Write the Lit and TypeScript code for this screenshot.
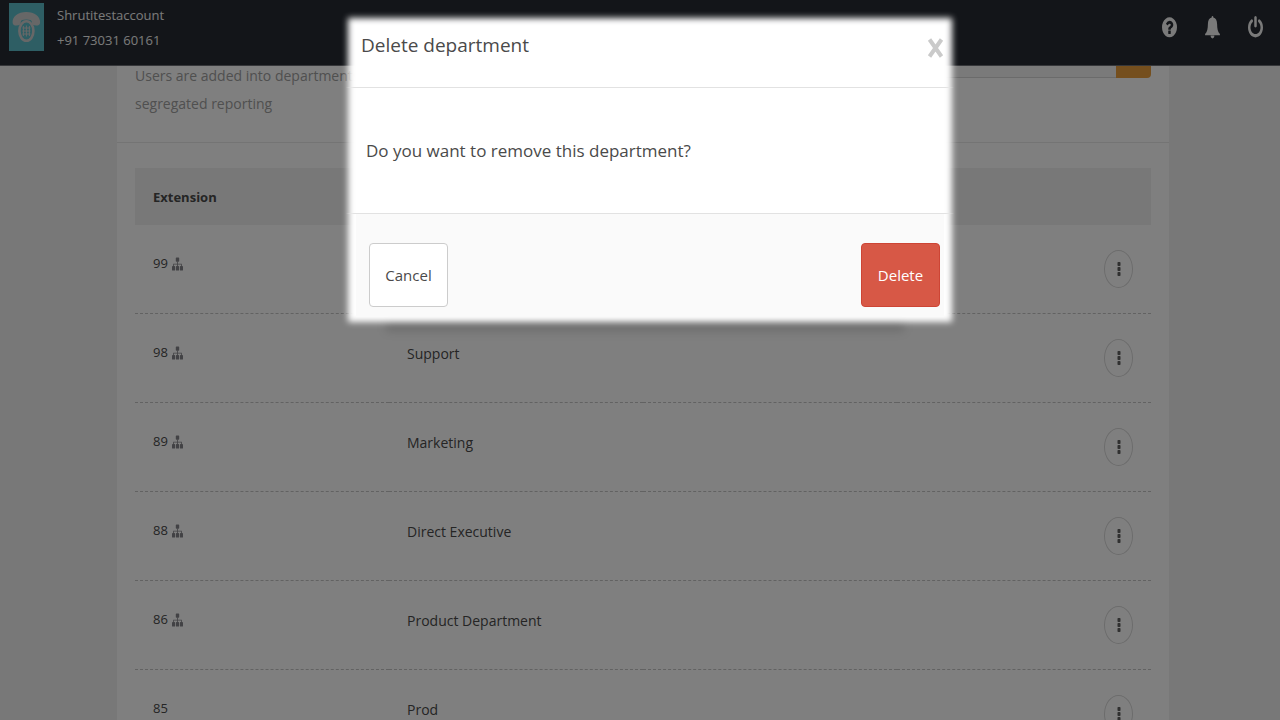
import { LitElement, html, css } from "lit";
import { customElement } from "lit/decorators.js";

interface Department {
  extension: string;
  name: string;
}

const DEPARTMENTS: Department[] = [
  { extension: "99", name: "" },
  { extension: "98", name: "Support" },
  { extension: "89", name: "Marketing" },
  { extension: "88", name: "Direct Executive" },
  { extension: "86", name: "Product Department" },
  { extension: "85", name: "Prod" },
];

const sitemapIcon = html`<svg class="sitemap" viewBox="0 0 11 14" preserveAspectRatio="none" aria-hidden="true">
  <rect x="3.8" y="0.4" width="3.4" height="4.4" rx="0.7" />
  <path d="M5.1 4.5h.8v2.2h3.9v2.6H9V7.6H5.9v1.7h-.8V7.6H2v1.7h-.8V6.7h3.9z" />
  <rect x="0" y="9" width="3.1" height="4.6" rx="0.7" />
  <rect x="3.9" y="9" width="3.2" height="4.6" rx="0.7" />
  <rect x="7.9" y="9" width="3.1" height="4.6" rx="0.7" />
</svg>`;

@customElement("top-bar")
export class TopBar extends LitElement {
  static styles = css`
    :host {
      display: flex;
      align-items: flex-start;
      justify-content: space-between;
      box-sizing: border-box;
      height: 66px;
      padding: 2px 17px 0 9px;
      background: #262a32;
      border-bottom: 1px solid #6c6f75;
      color: #fff;
    }
    .account {
      display: flex;
      gap: 13px;
    }
    .logo {
      display: block;
      width: 35px;
      height: 49px;
    }
    .lines {
      padding-top: 1px;
      font-size: 13px;
      line-height: 25px;
      color: #f4f4f4;
    }
    .actions {
      display: flex;
      gap: 28px;
      padding-top: 13px;
    }
    .action {
      display: block;
      width: 15px;
      height: 24px;
      padding: 0;
      border: 0;
      background: none;
      color: #f4f4f4;
    }
    .icon {
      display: block;
      width: 15px;
      height: 24px;
      fill: currentColor;
    }
  `;

  render() {
    return html`
      <div class="account">
        <svg class="logo" viewBox="0 0 35 49" role="img" aria-label="Telephone">
          <rect y="1" width="35" height="48" fill="#5cbcc8" />
          <path
            fill="#cfcfcf"
            d="M3.6 20.2C3.4 14.6 9 9.9 17.3 9.9s14 4.7 13.8 10.3c0 2.4-1.3 3.4-4 3.4-2.900 0-4.300-1.100-4.300-3.800 0-1.500-1.900-2.300-5.500-2.300s-5.500.800-5.500 2.300c0 2.700-1.400 3.800-4.200 3.800-2.700 0-4-1-4-3.400z"
          />
          <ellipse cx="17.400" cy="29" rx="7" ry="9.800" fill="none" stroke="#cfcfcf" stroke-width="2.600" />
          <path
            stroke="#cfcfcf"
            stroke-width="1"
            fill="none"
            d="M14.400 24v10M17.400 23.500v11M20.400 24v10M13.400 26h8M13.400 29h8M13.400 32h8"
          />
        </svg>
        <div class="lines">
          <div>Shrutitestaccount</div>
          <div>+91 73031 60161</div>
        </div>
      </div>
      <div class="actions">
        <button class="action" aria-label="Help">
          <svg class="icon" viewBox="128 -50 1536 1850" preserveAspectRatio="none">
            <path
              d="M1024 1376v-192q0-14-9-23t-23-9h-192q-14 0-23 9t-9 23v192q0 14 9 23t23 9h192q14 0 23-9t9-23zm256-672q0-88-55.500-163t-138.500-116-170-41q-243 0-371 213-15 24 8 42l132 100q7 6 19 6 16 0 25-12 53-68 86-92 34-24 86-24 48 0 85.500 26t37.500 59q0 38-20 61t-68 45q-63 28-115.500 86.500t-52.500 125.500v36q0 14 9 23t23 9h192q14 0 23-9t9-23q0-19 21.500-49.500t54.500-49.500q32-18 49-28.500t46-35 44.500-48 28-60.500 12.500-81zm384 192q0 209-103 385.500t-279.500 279.500-385.500 103-385.500-103-279.500-279.500-103-385.500 103-385.500 279.500-279.500 385.500-103 385.500 103 279.500 279.500 103 385.500z"
            />
          </svg>
        </button>
        <button class="action" aria-label="Notifications">
          <svg class="icon" viewBox="0 0 15 24">
            <path
              d="M6.700 2.600V1.900a.8.8 0 0 1 1.600 0v.7c2.500.6 3.700 2.900 3.800 6.300.1 4.900.6 7.700 2.800 10.100v1.300H.1V19c2.200-2.400 2.700-5.200 2.800-10.100.1-3.400 1.300-5.700 3.800-6.300z"
            />
            <path d="M5.600 20.600h3.800c0 1.700-.7 2.800-1.900 2.800s-1.900-1.100-1.900-2.800z" />
          </svg>
        </button>
        <button class="action" aria-label="Log out">
          <svg class="icon" viewBox="128 -80 1536 1870" preserveAspectRatio="none">
            <path
              d="M1664 896q0 156-61 298t-164 245-245 164-298 61-298-61-245-164-164-245-61-298q0-182 80.500-343t226.500-270q43-32 95.500-25t83.500 50q32 42 24.500 94.500t-49.500 84.500q-98 74-151.500 181t-53.500 228q0 104 40.500 198.500t109.500 163.500 163.500 109.500 198.500 40.500 198.500-40.500 163.500-109.500 109.500-163.500 40.500-198.500q0-121-53.500-228t-151.500-181q-42-32-49.500-84.500t24.500-94.500q31-43 84-50t95 25q146 109 226.500 270t80.500 343zm-640-768v640q0 52-38 90t-90 38-90-38-38-90v-640q0-52 38-90t90-38 90 38 38 90z"
            />
          </svg>
        </button>
      </div>
    `;
  }
}

@customElement("department-panel")
export class DepartmentPanel extends LitElement {
  static styles = css`
    :host {
      display: block;
      background: #fff;
    }
    .head {
      display: flex;
      justify-content: space-between;
      align-items: flex-start;
      padding: 62px 18px 24px;
      border-bottom: 1px solid #e8e8e8;
    }
    .note {
      margin: 0;
      font-size: 14px;
      line-height: 28px;
      color: #a0a0a0;
    }
    .search {
      display: flex;
      width: 340px;
      margin-top: -22px;
    }
    .field {
      flex: 1;
      min-width: 0;
      box-sizing: border-box;
      height: 38px;
      border: 1px solid #d6d6d6;
      border-right: 0;
      background: #f4f4f4;
      font: inherit;
    }
    .go {
      width: 35px;
      height: 38px;
      border: 0;
      border-radius: 0 4px 4px 0;
      background: #eb9f3d;
    }
    .body {
      padding: 25px 18px 0;
    }
    .table {
      width: 100%;
      table-layout: fixed;
      border-collapse: separate;
      border-spacing: 0;
      color: #4a4a4a;
    }
    .th {
      height: 57px;
      box-sizing: border-box;
      padding: 0 18px;
      background: #f0f0f0;
      font-size: 13px;
      font-weight: 700;
      text-align: left;
    }
    .td {
      height: 89px;
      box-sizing: border-box;
      padding: 24px 18px 0;
      border-bottom: 1px dashed #c4c4c4;
      font-size: 13px;
      line-height: 28px;
      vertical-align: top;
    }
    .name {
      padding-top: 26px;
      font-size: 14px;
    }
    .tools {
      padding-top: 25px;
      text-align: right;
    }
    .sitemap {
      width: 11px;
      height: 14px;
      margin-left: 1px;
      fill: #85858a;
      vertical-align: -3px;
    }
    .more {
      display: inline-block;
      width: 29px;
      height: 38px;
      padding: 0;
      border: 1px solid #d8d8d8;
      border-radius: 50%;
      background: none;
      vertical-align: top;
    }
    .dots {
      display: block;
      margin: 0 auto;
      width: 4px;
      height: 16px;
      fill: #606060;
    }
  `;

  render() {
    return html`
      <div class="head">
        <p class="note">Users are added into departments<br />segregated reporting</p>
        <div class="search">
          <input class="field" type="text" aria-label="Search departments" />
          <button class="go" aria-label="Search"></button>
        </div>
      </div>
      <div class="body">
        <table class="table">
          <thead>
            <tr>
              <th class="th">Extension</th>
              <th class="th"></th>
              <th class="th"></th>
              <th class="th"></th>
            </tr>
          </thead>
          <tbody>
            ${DEPARTMENTS.map(
              (d) => html`<tr>
                <td class="td">${d.extension} ${d.extension === "85" ? "" : sitemapIcon}</td>
                <td class="td name">${d.name}</td>
                <td class="td"></td>
                <td class="td tools">
                  <button class="more" aria-label="More actions">
                    <svg class="dots" viewBox="0 0 4 16">
                      <rect x="0.500" y="1" width="3" height="4" rx="0.800" />
                      <rect x="0.500" y="6" width="3" height="4" rx="0.800" />
                      <rect x="0.500" y="11" width="3" height="4" rx="0.800" />
                    </svg>
                  </button>
                </td>
              </tr>`
            )}
          </tbody>
        </table>
      </div>
    `;
  }
}

@customElement("confirm-dialog")
export class ConfirmDialog extends LitElement {
  static styles = css`
    :host {
      display: block;
      position: relative;
      color: #4a4a4a;
    }
    .shade {
      position: absolute;
      inset: auto 46px -10px 36px;
      height: 30px;
      background: rgba(0, 0, 0, 0.12);
      filter: blur(4px);
    }
    .glow {
      position: absolute;
      inset: 0 -2px;
      background: #fff;
      filter: blur(3px);
    }
    .content {
      position: relative;
      padding-bottom: 6px;
    }
    .head {
      display: flex;
      align-items: center;
      justify-content: space-between;
      box-sizing: border-box;
      height: 69px;
      padding: 0 6px 15px 11px;
    }
    .title {
      margin: 0;
      font-size: 19px;
      font-weight: 400;
      line-height: 28px;
    }
    .close {
      width: 17px;
      height: 24px;
      margin-top: 6px;
      padding: 0;
      border: 0;
      background: none;
    }
    .cross {
      display: block;
      width: 17px;
      height: 24px;
      stroke: #cacaca;
      stroke-width: 4;
    }
    .message {
      margin: 0;
      padding: 49px 16px 48px;
      font-size: 17px;
      line-height: 28px;
    }
    .foot {
      display: flex;
      justify-content: space-between;
      margin: 0 6px;
      padding: 29px 4px 9px 13px;
      background: #fafafa;
    }
    .rule {
      height: 1px;
      margin: 0 -4px;
      background: linear-gradient(to right, transparent, #e2e2e2 8px, #e2e2e2 calc(100% - 8px), transparent);
    }
    .button {
      box-sizing: border-box;
      width: 79px;
      height: 64px;
      padding: 0;
      border: 1px solid #ccc;
      border-radius: 4px;
      background: #fff;
      color: inherit;
      font-family: inherit;
      font-size: 15px;
    }
    .danger {
      border-color: #cd4535;
      background: #d75846;
      color: #fff;
    }
  `;

  render() {
    return html`
      <div class="shade"></div>
      <div class="glow"></div>
      <div class="content" role="dialog" aria-labelledby="title">
        <div class="head">
          <h2 class="title" id="title">Delete department</h2>
          <button class="close" aria-label="Close">
            <svg class="cross" viewBox="0 0 17 24"><path d="M2.500 3.500L14.500 20.500M14.500 3.500L2.500 20.500" /></svg>
          </button>
        </div>
        <div class="rule"></div>
        <p class="message">Do you want to remove this department?</p>
        <div class="rule"></div>
        <div class="foot">
          <button class="button">Cancel</button>
          <button class="button danger">Delete</button>
        </div>
      </div>
    `;
  }
}

@customElement("app-root")
export class AppRoot extends LitElement {
  static styles = css`
    :host {
      display: block;
      position: relative;
      height: 100vh;
      overflow: hidden;
      background: #f0f0f0;
      font-family: "Open Sans", "Noto Sans", sans-serif;
    }
    .bar {
      position: absolute;
      inset: 0 0 auto;
    }
    .page {
      padding: 0 111px 0 117px;
    }
    .overlay {
      position: absolute;
      inset: 0;
      display: flex;
      justify-content: center;
      align-items: flex-start;
      padding: 18px 6px 18px 26px;
      background: rgba(0, 0, 0, 0.5);
    }
    .dialog {
      width: 600px;
    }
  `;

  render() {
    return html`
      <main class="page"><department-panel></department-panel></main>
      <top-bar class="bar"></top-bar>
      <div class="overlay"><confirm-dialog class="dialog"></confirm-dialog></div>
    `;
  }
}
